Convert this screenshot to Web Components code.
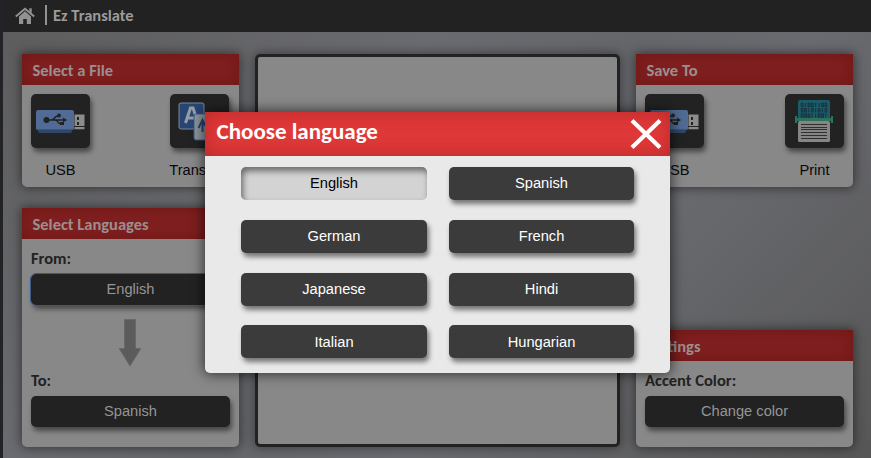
<!DOCTYPE html>
<html lang="en"><head><meta charset="utf-8"><title>Ez Translate</title>
<style>html,body{margin:0;height:100%;overflow:hidden}body{font-family:"Liberation Sans",Arial,sans-serif;font-size:15px}</style></head>
<body><ez-app></ez-app>
<script>
const define=(name,html)=>customElements.define(name,class extends HTMLElement{
  constructor(){super();const t=document.createElement('template');t.innerHTML=html;
    this.attachShadow({mode:'open'}).append(t.content.cloneNode(true));}
});
const heading='font-family:Carlito,Lato,sans-serif;font-weight:700;white-space:nowrap;';

define('ez-bar',`<style>:host{display:flex;height:32px;background:#222;align-items:flex-start;box-sizing:border-box;padding-left:12px;color:#9b9b9b;${heading}font-size:16.5px;line-height:20px}
svg{display:block;margin-top:7px}i{width:2px;height:20px;background:#929292;margin:5px 6px 0 10px}span{margin-top:5px}</style>
<svg width="20" height="18" viewBox="0 0 20 18"><path d="M4 9.600 10 4.200l6 5.400V17h-4.200v-5H8.200v5H4z" fill="#929292"/><path d="M.8 9.500 10 1.700l9.200 7.800" fill="none" stroke="#929292" stroke-width="2"/><path d="M14.300 1.300h2.400v5l-2.400-2z" fill="#929292"/></svg><i></i><span><slot></slot></span>`);

define('ez-panel',`<style>:host{display:flex;flex-direction:column;background:#888;border-radius:0 0 5px 5px;box-shadow:0 0 11px 1px rgba(0,0,0,.5)}
header{height:31px;box-sizing:border-box;padding:0 0 0 10.5px;line-height:32px;background:#801f1f;box-shadow:inset 0 0 16px rgba(70,0,0,.3);color:#9a8f8f;${heading}font-size:16.5px}
section{flex:1;padding:9px 9px 0}</style><header><slot name="title"></slot></header><section><slot></slot></section>`);

define('ez-tile',`<style>:host{display:flex;flex-direction:column;align-items:center;width:59px;color:#090909}
div{width:59px;height:54px;border-radius:5px;background:#222;box-shadow:2px 4px 5px rgba(0,0,0,.48)}span{line-height:17px;margin-top:14px;white-space:nowrap;font-size:14.67px}
::slotted(svg){display:block}</style><div><slot name="icon"></slot></div><span><slot></slot></span>`);

define('ez-button',`<style>:host{display:block;box-sizing:border-box;height:31px;line-height:31px;border-radius:5px;background:#222;color:#959595;text-align:center;box-shadow:2px 4px 5px rgba(0,0,0,.48);font-size:14.67px}
:host([focused]){outline:1px solid #3b5a8c;outline-offset:0}
:host([modal]){height:33px;line-height:33px;background:#3b3b3b;color:#fff;box-shadow:2px 4px 5px rgba(0,0,0,.5)}
:host([selected]){background:#d3d3d3;color:#000;box-shadow:inset 2px 4px 6px rgba(0,0,0,.5)}
:host([last]){line-height:34px}</style><slot></slot>`);

define('ez-label',`<style>:host{display:block;line-height:18px;padding-bottom:2px;color:#222;${heading}font-size:16.5px}</style><slot></slot>`);

const usb=`<svg slot="icon" width="59" height="54" viewBox="0 0 59 54"><rect x="7" y="21" width="34" height="18" rx="2" fill="#2f4669"/><rect x="5" y="16" width="38" height="20" rx="2" fill="#506b95"/><path d="M5 35.5h38" stroke="#3a557e"/><path d="M43.5 20.5h10V32h-10zM43.500 33h10v2.300h-10z" fill="#8c8c8c"/><path d="M46 23h2v3h-2zm0 5h2v3h-2z" fill="#222"/><circle cx="15.500" cy="26" r="3" fill="#222"/><path d="M16 26h17M20 26c4 0 3-4 7-4M24 26c4 0 2 4 6 4" fill="none" stroke="#222" stroke-width="1.500"/><circle cx="28" cy="21.500" r="1.900" fill="#222"/><path d="M29 28h4v3h-4zM32 23.500l4 2.500-4 2.500z" fill="#222"/></svg>`;
const translate=`<svg slot="icon" width="59" height="54" viewBox="0 0 59 54"><rect x="9" y="9" width="25" height="26" rx="2" fill="#264675" stroke="#7d8797"/><path d="M15.500 29 20.500 14h2.500l5 15M17 24h9.500" fill="none" stroke="#989da4" stroke-width="3"/><rect x="24" y="20" width="25" height="26" rx="2" fill="#8f959c" stroke="#395a83"/><path d="M32.500 38V26M28.500 34l4-8 4 8M37 40V28" fill="none" stroke="#264675" stroke-width="2"/></svg>`;
/* Code grid on the scanned sheet: alternating narrow bars and hollow cells. */
let bits='';
for(let r=0;r<3;r++)for(let c=0;c<8;c++){const x=17+c*3.4,y=9+r*5.3;bits+=(c+r*3)%4===1||c===4?`<path d="M${x} ${y}v4" stroke-width="1.200"/>`:`<rect x="${x-.7}" y="${y+.3}" width="1.700" height="3.300"/>`;}
const print=`<svg slot="icon" width="59" height="54" viewBox="0 0 59 54"><rect x="13" y="6" width="32" height="19" rx="2" fill="#1d5b69"/><g fill="none" stroke="#163641" stroke-width="1.100">${bits}</g><rect x="13" y="27" width="32" height="21" rx="1.500" fill="#858585"/><path d="M16 30.500h26M16 33.500h26M16 35.500h26M16 38.500h26M16 41.500h26M16 44.500h26" stroke="#303030"/><path d="M10 25.500h38" stroke="#2f725a" stroke-width="3"/><path d="M11 22v7M47 22v7" stroke="#2f725a" stroke-width="2"/></svg>`;

define('ez-dialog',`<style>:host{display:flex;flex-direction:column;box-sizing:border-box;background:#e9e9e9;border-radius:0 0 5px 5px;box-shadow:0 0 13px 1px rgba(0,0,0,.65)}
header{display:flex;justify-content:space-between;height:44px;box-sizing:border-box;padding:0 8px 0 11.500px;background:#df3838;box-shadow:inset 0 0 18px rgba(90,0,0,.28);color:#fff;${heading}font-size:23px;line-height:38px}
svg{margin-top:6px}section{display:grid;grid-template-columns:186px 185px;grid-auto-rows:33px;gap:19.750px 22px;padding:11px 0 0 36px}</style>
<header><slot name="title"></slot><svg width="32" height="32" viewBox="0 0 32 32"><path d="M2 2.500l28 27M30 2.500 2 29.500" stroke="#fff" stroke-width="4.200"/></svg></header><section><slot></slot></section>`);

define('ez-app',`<style>:host{display:block;position:relative;width:871px;height:458px;box-sizing:border-box;padding-left:3px;background:#222327}
.page{height:458px;background:linear-gradient(135deg,#5c5c5c 0%,#6a6b70 35%,#65666a 50%,#6a6b70 64%,#565656 100%)}
main{display:grid;grid-template-columns:217px 365px 217px;gap:16px;padding:22px 0 0 19px;height:393px}
.column{display:flex;flex-direction:column;justify-content:space-between}.files{height:133px}.languages{height:239px}.settings{height:117px}
.preview{border:3px solid #222;border-radius:5px;background:#888;box-shadow:0 0 11px 1px rgba(0,0,0,.4)}
.tiles{display:flex;justify-content:space-between}.left{padding-right:1px}
.arrow{display:block;margin:14px 0 4px 87px}
ez-label{margin-bottom:5px}.languages ez-label:first-of-type,.settings ez-label{margin-top:-4px;padding-top:5px}
ez-dialog{position:absolute;left:205px;top:112px;width:465px;height:261px}</style>
<div class="page"><ez-bar>Ez Translate</ez-bar><main>
<div class="column"><ez-panel class="files"><span slot="title">Select a File</span><div class="tiles left"><ez-tile>${usb}USB</ez-tile><ez-tile>${translate}Translate</ez-tile></div></ez-panel>
<ez-panel class="languages"><span slot="title">Select Languages</span><ez-label>From:</ez-label><ez-button focused>English</ez-button><svg class="arrow" width="24" height="48" viewBox="0 0 24 48"><path d="M6.500.5h11v29h5.300L12 47 1.200 29.500h5.300z" fill="#5b5b5b" stroke="#686868"/></svg><ez-label>To:</ez-label><ez-button>Spanish</ez-button></ez-panel></div>
<div class="preview"></div>
<div class="column"><ez-panel class="files"><span slot="title">Save To</span><div class="tiles"><ez-tile>${usb}USB</ez-tile><ez-tile>${print}Print</ez-tile></div></ez-panel>
<ez-panel class="settings"><span slot="title">Settings</span><ez-label>Accent Color:</ez-label><ez-button>Change color</ez-button></ez-panel></div>
</main></div>
<ez-dialog><span slot="title">Choose language</span><ez-button modal selected>English</ez-button><ez-button modal>Spanish</ez-button><ez-button modal>German</ez-button><ez-button modal>French</ez-button><ez-button modal>Japanese</ez-button><ez-button modal>Hindi</ez-button><ez-button modal last>Italian</ez-button><ez-button modal last>Hungarian</ez-button></ez-dialog>`);
</script></body></html>
